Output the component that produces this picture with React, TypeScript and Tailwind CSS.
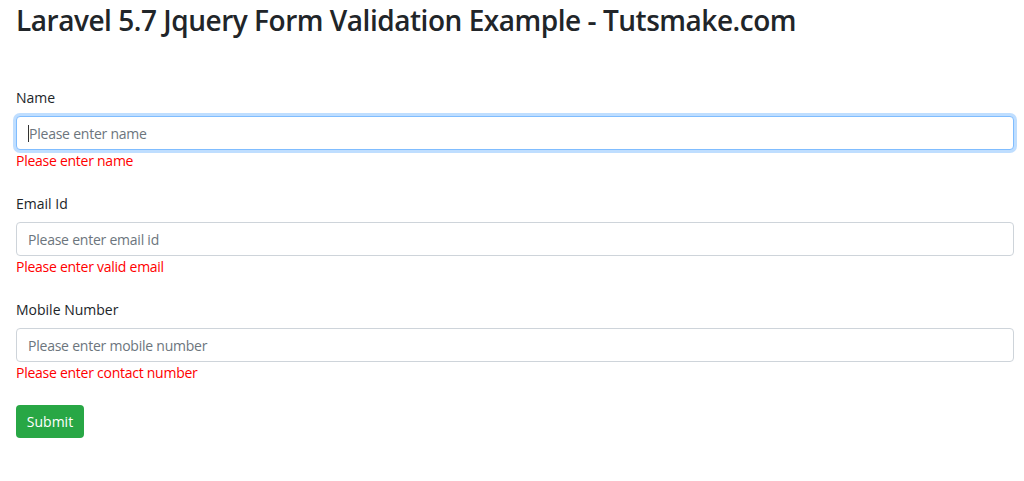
import React from "react";

const font = { fontFamily: '"Segoe UI", "Open Sans", "Noto Sans", sans-serif' };

function Group({ label, placeholder, error, focused }: { label: string; placeholder: string; error: string; focused?: boolean }) {
  return (
    <div className="mb-[22px]">
      <div className="text-[14px] leading-[21px] text-[#212529] mb-[8px]">{label}</div>
      <div
        className={
          "h-[34px] rounded-[4px] border bg-white flex items-center pl-[11px] text-[14px] tracking-[-0.23px] text-[#6c757d] " +
          (focused ? "border-[#80bdff] shadow-[0_0_0_3px_rgba(0,123,255,0.25)]" : "border-[#ced4da]")
        }
      >
        {focused && <span className="inline-block w-px h-[17px] bg-[#333]" />}
        <span>{placeholder}</span>
      </div>
      <div className="text-[14px] leading-[21px] tracking-[-0.26px] text-[#ff0000]">{error}</div>
    </div>
  );
}

export default function App() {
  return (
    <div className="w-[1024px] h-[481px] bg-white pl-[16px] pr-[10px]" style={font}>
      <h3 className="text-[28px] font-semibold leading-[40px] tracking-[-0.47px] text-[#212529] mb-[47px]">
        Laravel 5.7 Jquery Form Validation Example - Tutsmake.com
      </h3>
      <Group label="Name" placeholder="Please enter name" error="Please enter name" focused />
      <Group label="Email Id" placeholder="Please enter email id" error="Please enter valid email" />
      <Group label="Mobile Number" placeholder="Please enter mobile number" error="Please enter contact number" />
      <button className="h-[33px] w-[68px] rounded-[4px] bg-[#28a745] text-white text-[14px]">Submit</button>
    </div>
  );
}
